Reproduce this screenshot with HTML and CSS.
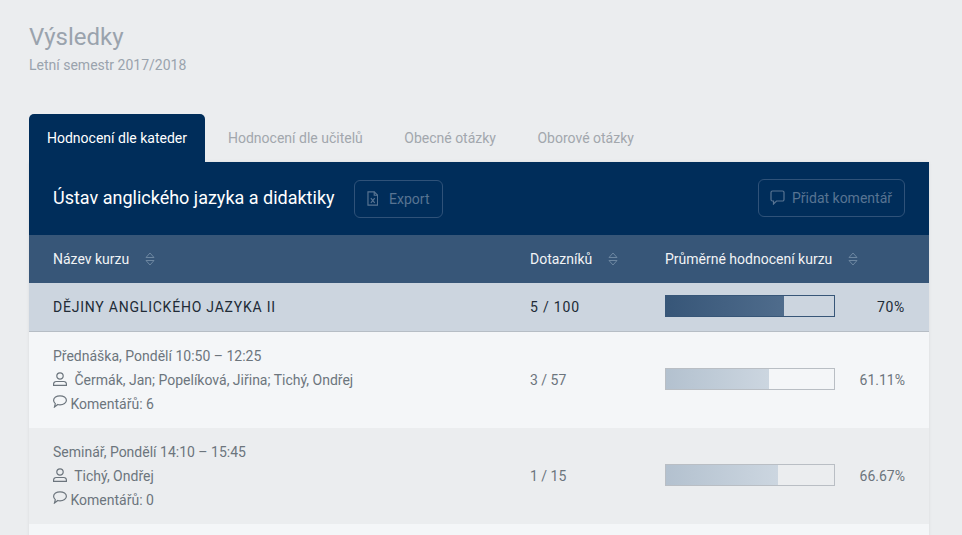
FILE: index.html
```html
<!DOCTYPE html>
<html lang="cs">
<head>
  <meta charset="UTF-8">
  <title>Výsledky</title>
  <link rel="stylesheet" href="styles.css">
</head>
<body>

<header class="page-head">
  <h1>Výsledky</h1>
  <p>Letní semestr 2017/2018</p>
</header>

<nav class="tabs">
  <a class="tab active">Hodnocení dle kateder</a>
  <a class="tab">Hodnocení dle učitelů</a>
  <a class="tab">Obecné otázky</a>
  <a class="tab">Oborové otázky</a>
</nav>

<section class="panel">
  <div class="dept">
    <h2>Ústav anglického jazyka a didaktiky</h2>
    <button class="btn btn-export">
      <svg width="12" height="15" viewBox="0 0 12 15" fill="none" stroke="currentColor" stroke-width="1.2"><path d="M1 .6h6.500l3.500 3.500v10.300h-10z"/><path d="M7.500.6v3.500h3.500"/><path d="M4 7l4 5M8 7l-4 5"/></svg>
      Export
    </button>
    <button class="btn btn-comment">
      <svg width="15" height="15" viewBox="0 0 15 15" fill="none" stroke="currentColor" stroke-width="1.2"><path d="M2.5 1h10a1.500 1.500 0 0 1 1.500 1.500v7a1.500 1.500 0 0 1-1.500 1.500h-6l-3 3v-3h-1a1.500 1.500 0 0 1-1.500-1.500v-7a1.500 1.500 0 0 1 1.500-1.500z"/></svg>
      Přidat komentář
    </button>
  </div>

  <div class="row head-row">
    <div class="col-name">Název kurzu <svg class="sort" width="10" height="14" viewBox="0 0 10 14" fill="none" stroke="currentColor"><path d="M1 5.500l4-4.500 4 4.500z"/><path d="M1 8.500l4 4.500 4-4.500z"/></svg></div>
    <div class="col-count">Dotazníků <svg class="sort" width="10" height="14" viewBox="0 0 10 14" fill="none" stroke="currentColor"><path d="M1 5.500l4-4.500 4 4.500z"/><path d="M1 8.500l4 4.500 4-4.500z"/></svg></div>
    <div class="col-rate">Průměrné hodnocení kurzu <svg class="sort" width="10" height="14" viewBox="0 0 10 14" fill="none" stroke="currentColor"><path d="M1 5.500l4-4.500 4 4.500z"/><path d="M1 8.500l4 4.500 4-4.500z"/></svg></div>
  </div>

  <div class="row course-row">
    <div class="col-name">DĚJINY ANGLICKÉHO JAZYKA II</div>
    <div class="col-count">5 / 100</div>
    <div class="col-rate">
      <div class="bar"><div class="fill" style="width: 70%"></div></div>
      <span class="pct">70%</span>
    </div>
  </div>

  <div class="row class-row">
    <div class="col-name">
      <div class="line">Přednáška, Pondělí 10:50 – 12:25</div>
      <div class="line">
        <svg class="ico-user" width="14" height="14" viewBox="0 0 14 14" fill="none" stroke="currentColor" stroke-width="1.2"><circle cx="7" cy="4" r="3.200"/><path d="M.6 13.400v-1.400a2.500 2.500 0 0 1 2.500-2.500h7.800a2.500 2.500 0 0 1 2.500 2.500v1.400z"/></svg>
        Čermák, Jan; Popelíková, Jiřina; Tichý, Ondřej
      </div>
      <div class="line">
        <svg class="ico-chat" width="14" height="13" viewBox="0 0 14 13" fill="none" stroke="currentColor" stroke-width="1.2"><path d="M7 .8c3.500 0 6.400 1.900 6.400 4.500S10.500 9.800 7 9.800c-.8 0-1.500-.1-2.200-.3L1.500 12l.8-3.400C1.200 7.700.6 6.600.6 5.300.6 2.700 3.500.8 7 .8z"/></svg>
        Komentářů: 6
      </div>
    </div>
    <div class="col-count">3 / 57</div>
    <div class="col-rate">
      <div class="bar"><div class="fill" style="width: 61.11%"></div></div>
      <span class="pct">61.11%</span>
    </div>
  </div>

  <div class="row class-row alt">
    <div class="col-name">
      <div class="line">Seminář, Pondělí 14:10 – 15:45</div>
      <div class="line">
        <svg class="ico-user" width="14" height="14" viewBox="0 0 14 14" fill="none" stroke="currentColor" stroke-width="1.2"><circle cx="7" cy="4" r="3.200"/><path d="M.6 13.400v-1.400a2.500 2.500 0 0 1 2.500-2.500h7.800a2.500 2.500 0 0 1 2.500 2.500v1.400z"/></svg>
        Tichý, Ondřej
      </div>
      <div class="line">
        <svg class="ico-chat" width="14" height="13" viewBox="0 0 14 13" fill="none" stroke="currentColor" stroke-width="1.2"><path d="M7 .8c3.500 0 6.400 1.900 6.400 4.500S10.500 9.800 7 9.800c-.8 0-1.500-.1-2.200-.3L1.500 12l.8-3.400C1.200 7.700.6 6.600.6 5.300.6 2.700 3.500.8 7 .8z"/></svg>
        Komentářů: 0
      </div>
    </div>
    <div class="col-count">1 / 15</div>
    <div class="col-rate">
      <div class="bar"><div class="fill" style="width: 66.67%"></div></div>
      <span class="pct">66.67%</span>
    </div>
  </div>

  <div class="row class-row tail"></div>
</section>

</body>
</html>
```

FILE: styles.css
```css
html { overflow: hidden; }
body { margin: 0; height: 535px; overflow: hidden; padding: 0 33px 0 29px; background: #ebedef; font-family: Roboto, Arial, sans-serif; font-size: 14px; color: #6c757d; }

.page-head { padding-top: 23px; height: 91px; }
.page-head h1 { margin: 0; font-size: 24px; line-height: 29px; font-weight: 400; color: #9aa3ad; }
.page-head p { margin: 4px 0 0; font-size: 14px; line-height: 18px; color: #9aa3ad; }

.tabs { display: flex; height: 48px; }
.tab { padding: 0 18px; line-height: 48px; margin-right: 5.5px; color: #a2a7ad; }
.tab.active { background: #002d5a; color: #fff; border-radius: 5px 5px 0 0; margin-right: 5px; }

.panel { box-shadow: 0 0 3px rgba(0,0,0,0.08); }

.dept { display: flex; align-items: center; height: 73px; padding: 0 24px; background: #002d5a; color: #fff; }
.dept h2 { margin: 0 19px 2px 0; font-size: 18px; font-weight: 400; }
.btn { display: flex; align-items: center; height: 38px; background: none; border: 1px solid #2f5279; border-radius: 6px; color: #587492; font-family: inherit; font-size: 14px; }
.btn-export { gap: 11px; padding: 0 12px; width: 89px; }
.btn-comment { gap: 7px; margin-left: auto; padding: 0 12px 0 11px; margin-bottom: 2px; }

.row { display: flex; align-items: center; padding: 0 24px; }
.col-name { flex: 0 0 477px; }
.col-count { flex: 0 0 135px; }
.col-rate { flex: 1; display: flex; align-items: center; }

.head-row { height: 48px; background: #375678; color: #f1f3f5; }
.sort { color: #6d87a1; margin-left: 12px; vertical-align: -2px; }
.head-row .col-rate { display: block; }

.course-row { height: 48px; border-bottom: 1px solid #b6bdc5; background: #ccd5df; color: #212b36; }
.course-row .col-name { letter-spacing: 0.78px; }
.course-row .col-count { letter-spacing: 0.8px; }
.course-row .pct { letter-spacing: 0.7px; }

.bar { flex: 0 0 170px; height: 22px; box-sizing: border-box; border: 1px solid #375678; margin-bottom: 2px; }
.fill { height: 100%; background: linear-gradient(to right, #375678, #4f6c8c); }
.pct { margin-left: auto; }

.class-row { height: 96px; background: #f4f6f8; color: #6c757d; }
.class-row.alt { background: #ebedef; }
.class-row.tail { height: 30px; }
.line { line-height: 24px; }
.ico-user { color: #6c757d; margin-right: 4px; vertical-align: -1px; }
.ico-chat { vertical-align: 1px; }
.class-row .bar { border-color: #b9bec4; }
.class-row .fill { background: linear-gradient(to right, #b3c1cf, #ccd6e0); }
```
